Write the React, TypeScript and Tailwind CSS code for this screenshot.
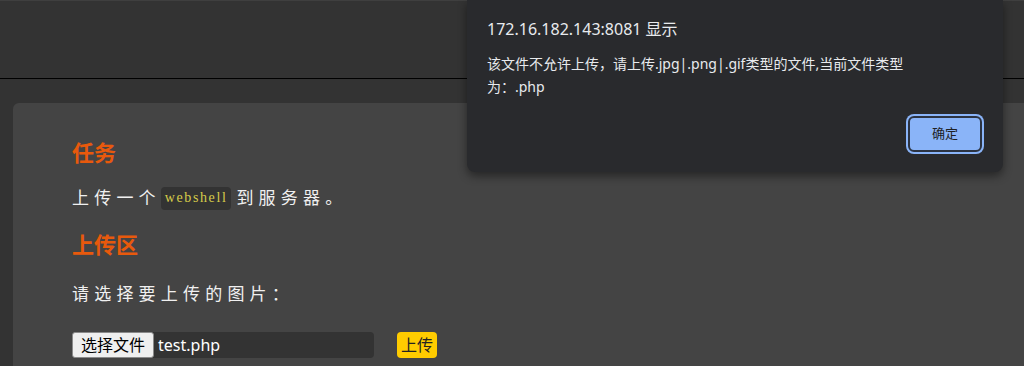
import React from "react";

const cjk = { fontFamily: '"Noto Sans", "Noto Sans CJK SC", sans-serif' };

const AlertDialog = () => (
  <div
    className="absolute top-0 left-[467px] w-[536px] h-[172px] rounded-b-lg bg-[#292a2d] shadow-[0_4px_10px_rgba(0,0,0,0.45)] px-5 pt-[17px]"
    style={cjk}
  >
    <div className="text-[16px] leading-[24px] text-[#e8eaed]">172.16.182.143:8081 显示</div>
    <p className="mt-[11px] text-[14px] leading-[23px] text-[#e8eaed]">
      该文件不允许上传，请上传.jpg|.png|.gif类型的文件,当前文件类型
      <br />
      为：.php
    </p>
    <div className="flex justify-end mt-[18px] pr-[1px]">
      <button className="w-[74px] h-[36px] rounded-[6px] bg-[#8ab4f8] border-2 border-[#2b3342] shadow-[0_0_0_2px_#8ab4f8] text-[13px] text-[#202124]">
        确定
      </button>
    </div>
  </div>
);

export default function App() {
  return (
    <div className="relative w-full h-[366px] overflow-hidden bg-[#333333]" style={cjk}>
      <div className="h-[79px] border-t border-[#3f3f3f] border-b border-b-black" />
      <div className="ml-[13px] mt-[24px] w-[1030px] h-[400px] rounded-md bg-[#444444] pl-[59px] pt-[34px]">
        <h2 className="text-[22px] leading-[30px] font-bold text-[#e8590c]">任务</h2>
        <p className="mt-[19px] text-[17px] leading-[24px] tracking-[5.2px] text-[#f0f0f0] flex items-center">
          上传一个
          <code
            className="mr-[5px] px-[4px] h-[23px] flex items-center rounded-[4px] bg-[#333333] text-[14px] tracking-[1.6px] text-[#d6cc4a]"
            style={{ fontFamily: '"Liberation Serif", serif' }}
          >
            webshell
          </code>
          到服务器。
        </p>
        <h2 className="mt-[19px] text-[22px] leading-[30px] font-bold text-[#e8590c]">上传区</h2>
        <p className="mt-[23px] text-[17px] leading-[24px] tracking-[5.2px] text-[#f0f0f0]">请选择要上传的图片：</p>
        <div className="mt-[26px] flex items-center">
          <div className="w-[302px] h-[26px] rounded-[4px] bg-[#333333] flex items-center">
            <span className="h-[26px] px-[8px] flex items-center bg-[#efefef] border border-[#8a8a8a] rounded-[3px] text-[16px] text-black">
              选择文件
            </span>
            <span className="ml-[4px] text-[16px] text-white">test.php</span>
          </div>
          <button className="ml-[23px] h-[26px] px-[4px] rounded-[4px] bg-[#ffcc00] text-[16px] text-[#222]">上传</button>
        </div>
      </div>
      <AlertDialog />
    </div>
  );
}
